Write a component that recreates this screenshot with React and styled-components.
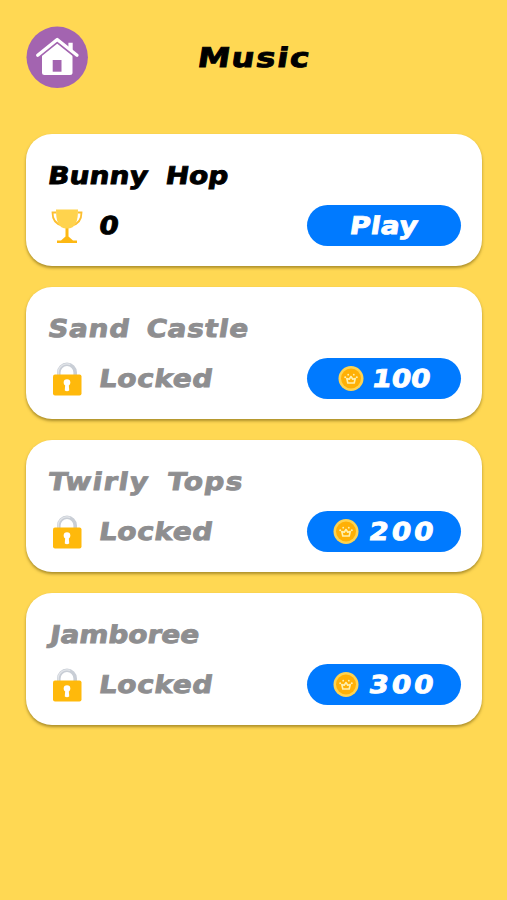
import React from 'react';
import styled, { createGlobalStyle } from 'styled-components';

const songs = [
  { title: 'Bunny Hop', score: 0, spacing: 0.1, gap: 7 },
  { title: 'Sand Castle', price: 100, spacing: 0.7, gap: 5 },
  { title: 'Twirly Tops', price: 200, spacing: 1.2, gap: 6 },
  { title: 'Jamboree', price: 300, spacing: 0, gap: 0, indent: 2 },
];

function HomeIcon() {
  return (
    <svg width="62" height="62" viewBox="0 0 62 62">
      <circle cx="31.2" cy="31.300" r="30.7" fill="#a364b0" />
      <path
        d="M31.2 16 L46.5 29 V46.5 Q46.5 49 44 49 H18.5 Q16 49 16 46.5 V29 Z"
        fill="#fff"
      />
      <path
        d="M11 31 L31.2 14.6 L51.5 31"
        fill="none"
        stroke="#a364b0"
        strokeWidth="4.6"
      />
      <path d="M42.4 16.700h4.300v10l-4.300-3.500z" fill="#fff" />
      <path
        d="M11.700 29.300 L31.2 13.500 L51 29.300"
        fill="none"
        stroke="#fff"
        strokeWidth="3.300"
        strokeLinecap="round"
        strokeLinejoin="round"
      />
      <rect x="26.700" y="34" width="8.800" height="11.700" fill="#a364b0" />
    </svg>
  );
}

function TrophyIcon() {
  return (
    <svg width="32" height="36" viewBox="0 0 32 36">
      <path
        d="M5 4.500H1.500C1.500 11 5 16 11 17.500M27 4.500h3.500C30.500 11 27 16 21 17.500"
        fill="none"
        stroke="#fdbf30"
        strokeWidth="1.800"
      />
      <path d="M14.500 19h3v9.500l4.500 4H26V35H6v-2.500h4l4.500-4z" fill="#fdb813" />
      <path d="M5 1.500h22C27 13 25 20.500 16 20.500S5 13 5 1.500z" fill="#ffd34d" />
    </svg>
  );
}

function LockIcon() {
  return (
    <svg width="30" height="34" viewBox="0 0 30 34">
      <path
        d="M6.800 15V10.500a8.200 8.200 0 0 1 16.400 0V15"
        fill="none"
        stroke="#c9ced6"
        strokeWidth="3.600"
      />
      <path
        d="M6.200 13v-3a8.900 8.900 0 0 1 12-7.600"
        fill="none"
        stroke="#e3e6ea"
        strokeWidth="1.200"
      />
      <rect x="1" y="12.500" width="28.500" height="21" rx="2" fill="#ffb90b" />
      <circle cx="15" cy="20.500" r="3.300" fill="#fff" />
      <path d="M13.300 21h3.400l.5 7.500q-2.200 1.600-4.400 0z" fill="#fff" />
    </svg>
  );
}

function CoinIcon() {
  return (
    <svg width="26" height="26" viewBox="0 0 26 26">
      <circle cx="13" cy="12.500" r="12.500" fill="#ffd34f" />
      <circle cx="13" cy="12.500" r="10" fill="#ffb006" />
      <path
        d="M9.800 17h6.400l1-4.500-2.400.8L13 10.500l-1.800 2.800-2.400-.8z"
        fill="none"
        stroke="#fff0ae"
        strokeWidth="1.600"
        strokeLinejoin="round"
      />
      <circle cx="7.200" cy="11.200" r="1" fill="#fff0ae" />
      <circle cx="10.200" cy="8.700" r=".9" fill="#fff0ae" />
      <circle cx="15.800" cy="8.700" r=".9" fill="#fff0ae" />
      <circle cx="18.800" cy="11.200" r="1" fill="#fff0ae" />
    </svg>
  );
}

function SongCard({ song }) {
  const locked = song.price !== undefined;

  return (
    <Card>
      <SongTitle $locked={locked} $indent={song.indent}>
        <Label $spacing={song.spacing} $gap={song.gap}>
          {song.title}
        </Label>
      </SongTitle>
      <CardRow>
        <IconSlot>{locked ? <LockIcon /> : <TrophyIcon />}</IconSlot>
        <Status $locked={locked}>
          <Label $spacing={0.5}>{locked ? 'Locked' : song.score}</Label>
        </Status>
        <ActionButton>
          {locked && <CoinIcon />}
          {locked ? (
            <Price $narrow={song.price < 200}>{song.price}</Price>
          ) : (
            <PlayLabel>Play</PlayLabel>
          )}
        </ActionButton>
      </CardRow>
    </Card>
  );
}

export default function App() {
  return (
    <Screen>
      <GlobalStyle />
      <Header>
        <HomeButton aria-label="Home">
          <HomeIcon />
        </HomeButton>
        <PageTitle>
          <TitleLabel>Music</TitleLabel>
        </PageTitle>
      </Header>
      <SongList>
        {songs.map((song) => (
          <SongCard key={song.title} song={song} />
        ))}
      </SongList>
    </Screen>
  );
}

const GlobalStyle = createGlobalStyle`
  * {
    box-sizing: border-box;
  }

  body {
    margin: 0;
    background: #ffd853;
  }

  body, button {
    font-family: 'DejaVu Sans', sans-serif;
    font-weight: bold;
  }

  svg {
    display: block;
    flex: none;
  }
`;

const Screen = styled.div`
  height: 900px;
  padding: 26px 25px 0 26px;
  background: #ffd853;
  overflow: hidden;
`;

const Header = styled.header`
  display: grid;
  grid-template-columns: 62px 1fr 62px;
  align-items: center;
  height: 62px;
`;

const HomeButton = styled.button`
  padding: 0;
  border: none;
  border-radius: 50%;
  background: none;
`;

const PageTitle = styled.h1`
  margin: 2px 0 0;
  font-size: 27px;
  line-height: 32px;
  text-align: center;
  color: #000;
`;

// wide slanted lettering
const Label = styled.span`
  display: inline-block;
  letter-spacing: ${(props) => props.$spacing || 0}px;
  word-spacing: ${(props) => props.$gap || 0}px;
  white-space: nowrap;
  transform: skewX(-9deg) scaleX(1.14);
  transform-origin: 0 75%;
  -webkit-text-stroke: 0.9px;
`;

const TitleLabel = styled(Label)`
  letter-spacing: 1.4px;
  transform: skewX(-9deg) scaleX(1.2);
  transform-origin: 50% 55%;
`;

const SongList = styled.main`
  display: flex;
  flex-direction: column;
  gap: 21px;
  margin-top: 46px;
`;

const Card = styled.section`
  height: 132px;
  padding: 26px 21px 0 22px;
  border-radius: 26px;
  background: #fff;
  box-shadow: 0 2px 3px rgba(90, 70, 0, 0.5);
`;

const SongTitle = styled.h2`
  height: 32px;
  margin: 0 0 0 ${(props) => (props.$indent || 0) - 1}px;
  font-size: 24.5px;
  line-height: 32px;
  color: ${(props) => (props.$locked ? '#8e8e90' : '#000')};
`;

const CardRow = styled.div`
  display: flex;
  align-items: center;
  height: 41px;
  margin-top: 13px;
`;

const IconSlot = styled.span`
  display: flex;
  justify-content: center;
  width: 38px;
`;

const Status = styled.span`
  margin-left: 12px;
  font-size: 24.5px;
  line-height: 32px;
  color: ${(props) => (props.$locked ? '#8e8e90' : '#000')};
`;

const ActionButton = styled.button`
  display: flex;
  align-items: center;
  justify-content: center;
  gap: 9px;
  width: 154px;
  height: 41px;
  margin-left: auto;
  padding: 0;
  border: none;
  border-radius: 21px;
  background: #007aff;
  color: #fff;
  font-size: 24.5px;
  line-height: 32px;
`;

const Price = styled(Label)`
  width: ${(props) => (props.$narrow ? 60 : 68)}px;
  margin-left: ${(props) => (props.$narrow ? -2 : 0)}px;
  letter-spacing: ${(props) => (props.$narrow ? 0 : 2.6)}px;
  text-align: left;
`;

const PlayLabel = styled(Label)`
  letter-spacing: 0.4px;
  transform-origin: 50% 55%;
`;
